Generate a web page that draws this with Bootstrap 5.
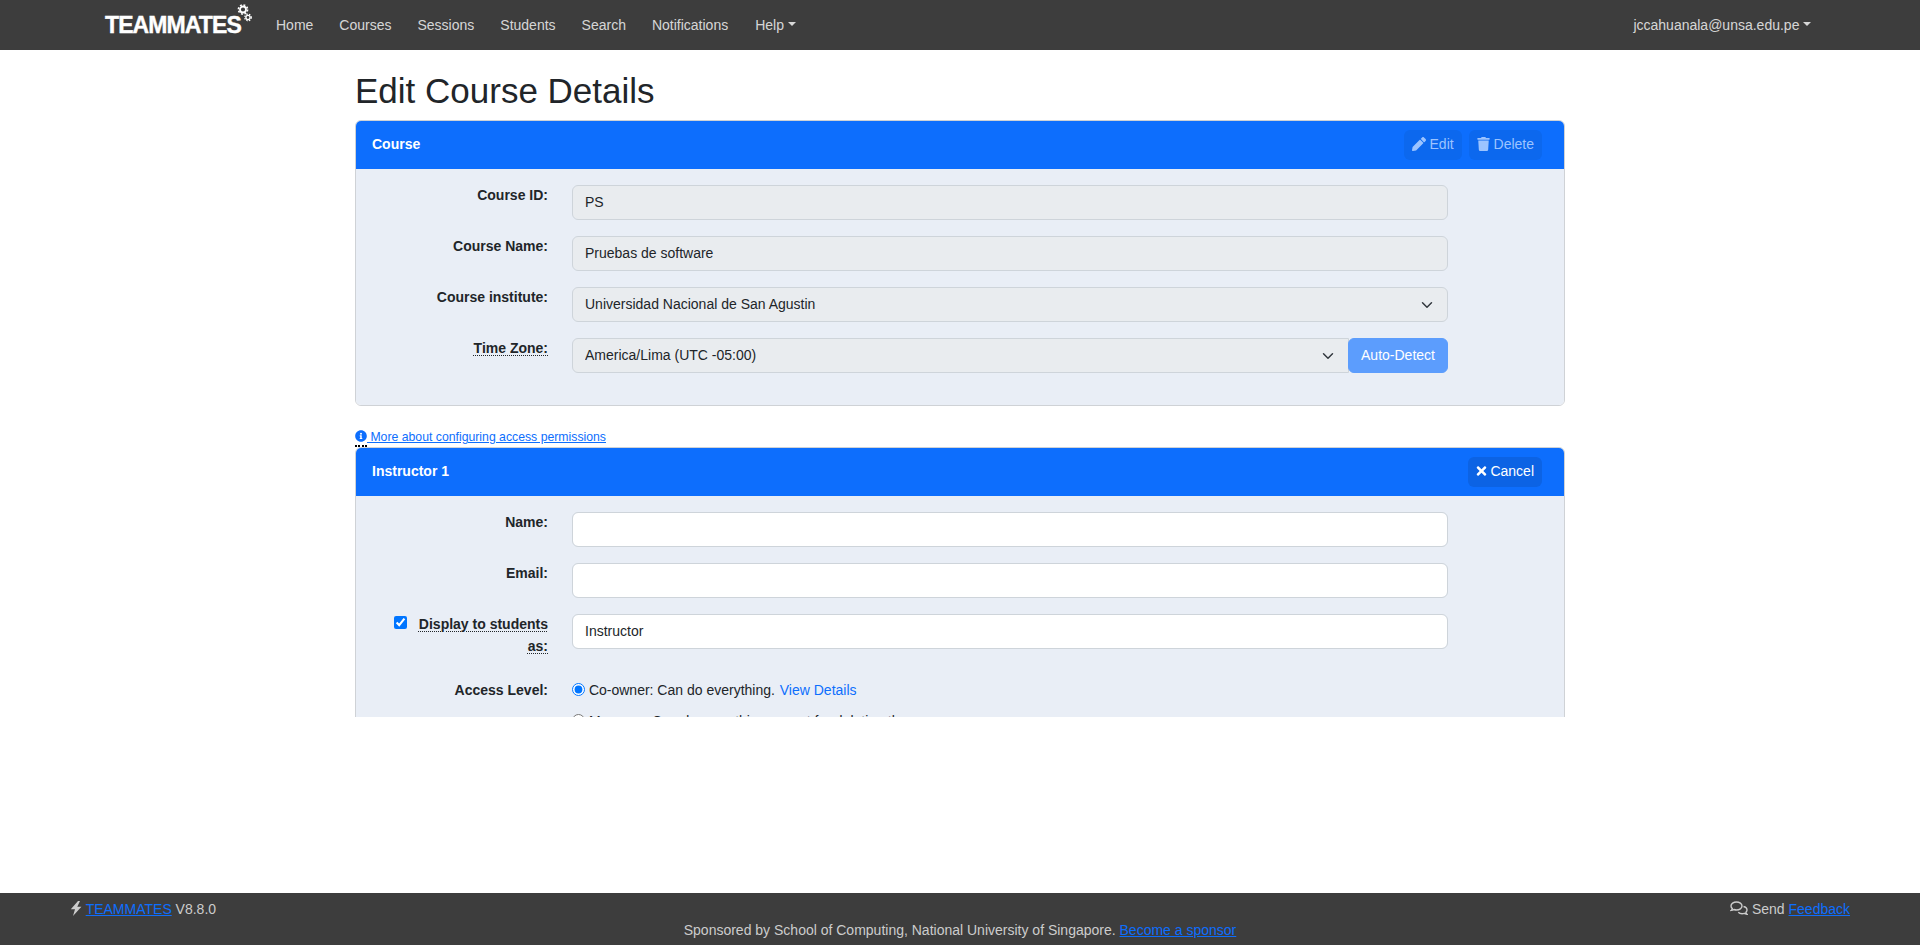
<!DOCTYPE html>
<html lang="en">
<head>
  <meta charset="UTF-8" />
  <meta name="viewport" content="width=device-width, initial-scale=1.0" />
  <title>Edit Course Details</title>
  <link href="https://cdn.jsdelivr.net/npm/bootstrap@5.3.2/dist/css/bootstrap.min.css" rel="stylesheet" />
  <style>
    body { font-family: "Liberation Sans", Arial, sans-serif; font-size: 14px; color: #212529; }
    .page-shell { min-height: 945px; }
    .top-bar { background: #3d3d3d; height: 50px; padding: 0 109px 0 105px; }
    .top-bar .nav-link { color: rgba(255,255,255,.8); font-size: 14px; padding: 8px 13px; }
    .top-bar .nav-link.p-0 { padding: 0; }
    .top-bar .help-toggle { margin-left: 1px; }
    .brand-text { color: #fff; font-weight: 700; font-size: 23px; letter-spacing: -.9px; line-height: 1; -webkit-text-stroke: .4px #fff; }
    .brand-wrap { width: 158px; margin-right: 0; }
    .page-clip { height: 667px; overflow: hidden; }
    .page-wrap { width: 1210px; margin: 0 auto; }
    .page-title { font-size: 35px; font-weight: 400; line-height: 1.2; margin: 20px 0 8px; }
    .panel-card { border-color: #cfd2d6; border-radius: 6px; }
    .panel-head { background: #0d6efd; color: #fff; height: 48px; padding: 0 22px 0 16px; border-radius: 5px 5px 0 0; font-weight: 700; }
    .head-title { margin-bottom: 2px; }
    .panel-body { background: #e9eef6; padding: 16px; border-radius: 0 0 5px 5px; }
    .head-gap { gap: 7px; }
    .head-btn { font-size: 14px; padding: 3px 8px 6px; height: 30px; line-height: 20px; border: 0; background: #0c63e4; color: #fff; font-weight: 400; }
    .head-btn:disabled { background: #0c68ee; color: #9cc4ff; opacity: 1; }
    .head-btn svg { vertical-align: -2px; }
    .form-line { margin-bottom: 16px; }
    .tall-line { margin-bottom: 23px; }
    .field-label { font-weight: 700; text-align: right; line-height: 22px; margin-top: -1px; }
    .hint-word { text-decoration: underline dotted #212529 1px; text-underline-offset: 2px; }
    .panel-body .form-control { font-size: 14px; height: 35px; padding: 5px 12px 7px; color: #212529; border-color: #ced4da; }
    .panel-body .form-select { font-size: 14px; height: 35px; padding: 6px 36px 6px 12px; color: #212529; border-color: #ced4da; }
    .panel-body .form-control:disabled, .panel-body .form-select:disabled { background-color: #e9ecef; }
    .auto-btn, .auto-btn:disabled { font-size: 14px; width: 100px; padding: 0; background: #5c9dfd; border-color: #5c9dfd; color: #fff; opacity: 1; border-radius: 6px !important; }
    .help-line { font-size: 12.25px; margin-top: 23px; line-height: 16px; height: 16px; }
    .help-line a, .view-link { color: #0d6efd; }
    .dot-mark { width: 12px; height: 2px; border-bottom: 2px dotted #000; }
    .radio-line { line-height: 20px; margin-bottom: 10.6px; }
    .radio-line input, .check-mark { accent-color: #0075ff; margin: 0; }
    .check-mark { width: 13px; height: 13px; vertical-align: 0; margin-right: 12px; }
    .radio-line input { width: 13px; height: 13px; vertical-align: -1px; }
    .view-link { text-decoration: none; margin-left: 1px; }
    .foot-bar { background: #3d3d3d; color: #ccc; height: 52px; padding: 6px 70px; line-height: 20px; }
    .foot-bar a { color: #0d6efd; }
    .foot-bar svg { vertical-align: -2px; }
    .foot-mid { text-align: center; margin-top: 1px; }
  </style>
</head>
<body>
  <div class="page-shell d-flex flex-column">
    <nav class="top-bar d-flex align-items-center">
      <a href="#" class="brand-wrap d-flex align-items-start text-decoration-none">
        <span class="brand-text">TEAMMATES</span>
        <svg width="16" height="21" viewBox="0 0 16 21" style="margin:-10px 0 0 -5px">
          <circle cx="7" cy="5.500" r="3" fill="none" stroke="#fff" stroke-width="1.800"/>
          <circle cx="7" cy="5.500" r="4.600" fill="none" stroke="#fff" stroke-width="1.600" stroke-dasharray="1.900 1.700"/>
          <circle cx="12" cy="13.500" r="2.100" fill="none" stroke="#fff" stroke-width="1.400"/>
          <circle cx="12" cy="13.500" r="3.300" fill="none" stroke="#fff" stroke-width="1.200" stroke-dasharray="1.400 1.300"/>
        </svg>
      </a>
      <ul class="nav">
        <li class="nav-item"><a class="nav-link" href="#">Home</a></li>
        <li class="nav-item"><a class="nav-link" href="#">Courses</a></li>
        <li class="nav-item"><a class="nav-link" href="#">Sessions</a></li>
        <li class="nav-item"><a class="nav-link" href="#">Students</a></li>
        <li class="nav-item"><a class="nav-link" href="#">Search</a></li>
        <li class="nav-item"><a class="nav-link" href="#">Notifications</a></li>
        <li class="nav-item help-toggle"><a class="nav-link dropdown-toggle" href="#">Help</a></li>
      </ul>
      <ul class="nav ms-auto">
        <li class="nav-item"><a class="nav-link dropdown-toggle p-0" href="#">jccahuanala@unsa.edu.pe</a></li>
      </ul>
    </nav>

    <main class="flex-grow-1">
      <div class="page-clip">
        <div class="page-wrap">
          <h1 class="page-title">Edit Course Details</h1>

          <div class="card panel-card">
            <div class="panel-head d-flex align-items-center justify-content-between">
              <span class="head-title">Course</span>
              <div class="d-flex head-gap">
                <button class="btn head-btn" disabled>
                  <svg width="14" height="14" viewBox="0 0 512 512" fill="currentColor"><path d="M497.900 142.100l-46.100 46.100c-4.700 4.700-12.300 4.700-17 0l-111-111c-4.700-4.700-4.700-12.300 0-17l46.100-46.100c18.700-18.700 49.100-18.700 67.900 0l60.100 60.100c18.800 18.700 18.800 49.100 0 67.900zM284.200 99.800L21.600 362.400.4 483.900c-2.900 16.400 11.400 30.600 27.800 27.800l121.500-21.300 262.600-262.600c4.700-4.700 4.700-12.300 0-17l-111-111c-4.800-4.700-12.400-4.700-17.100 0z"/></svg>
                  Edit
                </button>
                <button class="btn head-btn" disabled>
                  <svg width="13" height="14" viewBox="0 0 448 512" fill="currentColor"><path d="M432 32H312l-9.400-18.700A24 24 0 0 0 281.100 0H166.800a23.700 23.700 0 0 0-21.400 13.300L136 32H16A16 16 0 0 0 0 48v32a16 16 0 0 0 16 16h416a16 16 0 0 0 16-16V48a16 16 0 0 0-16-16zM53.200 467a48 48 0 0 0 47.900 45h245.800a48 48 0 0 0 47.900-45L416 128H32z"/></svg>
                  Delete
                </button>
              </div>
            </div>
            <div class="panel-body">
              <div class="row form-line">
                <label class="col-md-2 field-label">Course ID:</label>
                <div class="col-md-9"><input class="form-control" value="PS" disabled /></div>
              </div>
              <div class="row form-line">
                <label class="col-md-2 field-label">Course Name:</label>
                <div class="col-md-9"><input class="form-control" value="Pruebas de software" disabled /></div>
              </div>
              <div class="row form-line">
                <label class="col-md-2 field-label">Course institute:</label>
                <div class="col-md-9">
                  <select class="form-select" disabled><option>Universidad Nacional de San Agustin</option></select>
                </div>
              </div>
              <div class="row form-line">
                <label class="col-md-2 field-label"><span class="hint-word">Time Zone:</span></label>
                <div class="col-md-9">
                  <div class="input-group">
                    <select class="form-select" disabled><option>America/Lima (UTC -05:00)</option></select>
                    <button class="btn btn-primary auto-btn" disabled>Auto-Detect</button>
                  </div>
                </div>
              </div>
            </div>
          </div>

          <div class="help-line">
            <a href="#"><svg width="12" height="12" viewBox="0 0 512 512" fill="currentColor" style="vertical-align:-1px"><path d="M256 8C119 8 8 119 8 256s111 248 248 248 248-111 248-248S393 8 256 8zm0 110a42 42 0 1 1 0 84 42 42 0 0 1 0-84zm56 254a12 12 0 0 1-12 12h-88a12 12 0 0 1-12-12v-24a12 12 0 0 1 12-12h12v-64h-12a12 12 0 0 1-12-12v-24a12 12 0 0 1 12-12h64a12 12 0 0 1 12 12v100h12a12 12 0 0 1 12 12z"/></svg> More about configuring access permissions</a>
          </div>
          <div class="dot-mark"></div>

          <div class="card panel-card">
            <div class="panel-head d-flex align-items-center justify-content-between">
              <span class="head-title">Instructor 1</span>
              <button class="btn head-btn">
                <svg width="11" height="14" viewBox="0 0 352 512" fill="currentColor"><path d="M242.700 256l100.100-100.100c12.300-12.300 12.300-32.200 0-44.500l-22.200-22.200c-12.300-12.300-32.200-12.300-44.500 0L176 189.300 75.900 89.200c-12.300-12.300-32.200-12.300-44.500 0L9.200 111.400c-12.300 12.300-12.300 32.200 0 44.500L109.300 256 9.200 356.100c-12.300 12.300-12.300 32.200 0 44.500l22.200 22.200c12.300 12.300 32.200 12.300 44.500 0L176 322.700l100.100 100.100c12.300 12.300 32.200 12.300 44.500 0l22.200-22.200c12.300-12.300 12.300-32.200 0-44.500L242.700 256z"/></svg>
                Cancel
              </button>
            </div>
            <div class="panel-body">
              <div class="row form-line">
                <label class="col-md-2 field-label">Name:</label>
                <div class="col-md-9"><input class="form-control" /></div>
              </div>
              <div class="row form-line">
                <label class="col-md-2 field-label">Email:</label>
                <div class="col-md-9"><input class="form-control" /></div>
              </div>
              <div class="row tall-line">
                <label class="col-md-2 field-label"><input type="checkbox" class="check-mark" checked /><span class="hint-word">Display to students as:</span></label>
                <div class="col-md-9"><input class="form-control" value="Instructor" /></div>
              </div>
              <div class="row">
                <label class="col-md-2 field-label">Access Level:</label>
                <div class="col-md-9">
                  <div class="radio-line"><input type="radio" name="lvl" checked /> Co-owner: Can do everything. <a href="#" class="view-link">View Details</a></div>
                  <div class="radio-line"><input type="radio" name="lvl" /> Manager: Can do everything except for deleting the course.</div>
                </div>
              </div>
            </div>
          </div>
        </div>
      </div>
    </main>

    <footer class="foot-bar">
      <div class="d-flex justify-content-between">
        <div>
          <svg width="12" height="15" viewBox="0 0 12 15" fill="currentColor"><path d="M8 0L.8 8.300H5L3 15l8.400-9.200H7.300L10 0z"/></svg>
          <a href="#">TEAMMATES</a> V8.8.0
        </div>
        <div>
          <svg width="18" height="15" viewBox="0 0 18 15" fill="none" stroke="currentColor" stroke-width="1.400"><path d="M6.500 1C3.500 1 1 2.800 1 5c0 1 .5 1.900 1.300 2.600-.2.800-.7 1.400-1.100 1.800 1.100-.1 2-.4 2.700-.9.800.3 1.700.5 2.600.5 3 0 5.500-1.800 5.500-4S9.500 1 6.500 1z"/><path d="M13.500 5.500c2 .4 3.500 1.800 3.500 3.500 0 .9-.4 1.700-1.100 2.300.1.800.5 1.400 1 1.900-1-.1-1.900-.4-2.600-.9-.7.200-1.400.4-2.200.4-1.600 0-3-.6-3.800-1.500"/></svg>
          Send <a href="#">Feedback</a>
        </div>
      </div>
      <div class="foot-mid">Sponsored by School of Computing, National University of Singapore. <a href="#">Become a sponsor</a></div>
    </footer>
  </div>
  <script src="https://cdn.jsdelivr.net/npm/bootstrap@5.3.2/dist/js/bootstrap.bundle.min.js"></script>
</body>
</html>
